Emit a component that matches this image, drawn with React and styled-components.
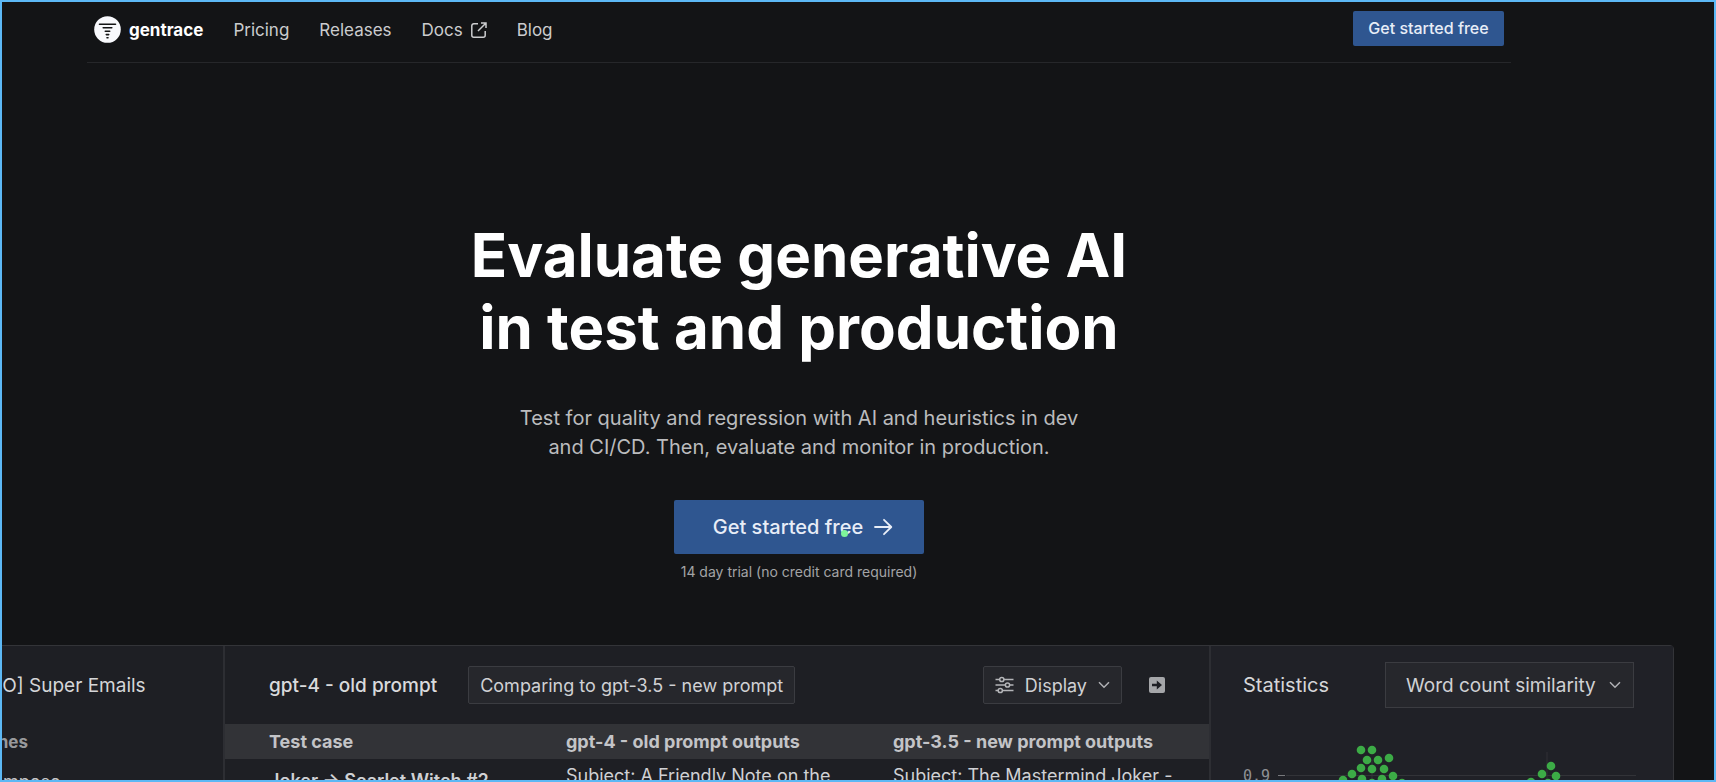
import React from 'react'
import styled, { createGlobalStyle } from 'styled-components'

const GlobalStyle = createGlobalStyle`
  * {
    box-sizing: border-box;
  }

  body {
    margin: 0;
    background-color: #131416;
    color: #ffffff;
    font-family: "Inter", sans-serif;
  }

  button, select {
    font-family: inherit;
    margin: 0;
  }
`;

const Page = styled.div`
  height: 100vh;
  border: 2px solid #5cb8f5;
  padding-right: 118px;
  overflow: hidden;
`;

const Header = styled.header`
  display: flex;
  align-items: center;
  justify-content: space-between;
  max-width: 1424px;
  height: 61px;
  margin: 0 auto;
  padding: 0 7px 8px;
  border-bottom: 1px solid #26272a;
`;

const Nav = styled.nav`
  display: flex;
  align-items: center;
  gap: 30px;
  padding-top: 3px;
`;

const Brand = styled.a`
  display: flex;
  align-items: center;
  gap: 8px;
  color: #ffffff;
  font-size: 17px;
  font-weight: 700;
  text-decoration: none;
`;

const NavLink = styled.a`
  display: flex;
  align-items: center;
  gap: 8px;
  color: #cbccce;
  font-size: 17px;
  line-height: 24px;
  text-decoration: none;
`;

const PrimaryButton = styled.button`
  display: flex;
  align-items: center;
  justify-content: center;
  gap: 11px;
  width: ${props => (props.$large ? '250px' : '151px')};
  height: ${props => (props.$large ? '54px' : '35px')};
  padding: ${props => (props.$large ? '0 0 0 8px' : '0')};
  border: none;
  border-radius: 2px;
  background-color: #2f5690;
  color: #e8edf7;
  font-size: ${props => (props.$large ? '20px' : '16px')};
  font-weight: 500;
`;

const Hero = styled.section`
  display: flex;
  flex-direction: column;
  align-items: center;
  padding: 156px 0 63px;
  text-align: center;
`;

const Title = styled.h1`
  margin: 0;
  font-size: 60px;
  font-weight: 700;
  line-height: 72px;
`;

const Subtitle = styled.p`
  margin: 41px 0 38px;
  color: #bbbcbe;
  font-size: 20px;
  line-height: 29px;
`;

const Note = styled.p`
  margin: 8px 0 0;
  color: #a3a4a6;
  font-size: 14px;
  line-height: 20px;
`;

const CursorWrap = styled.div`
  position: relative;
`;

const Cursor = styled.span`
  position: absolute;
  top: 30px;
  left: 167px;
  width: 7px;
  height: 7px;
  border-radius: 50%;
  background-color: #7df59a;
`;

/* wider than the column on purpose, it bleeds off the left side */
const Showcase = styled.div`
  display: flex;
  justify-content: center;
`;

const Product = styled.div`
  display: grid;
  grid-template-columns: 300px 986px 462px;
  flex: none;
  height: 460px;
  border: 1px solid #333438;
  border-radius: 4px;
  background-color: #1e1f24;
`;

const Pane = styled.section`
  border-right: ${props => (props.$last ? 'none' : '2px solid #2d2e33')};
  background-color: ${props => (props.$last ? '#202127' : 'transparent')};
  min-width: 0;
`;

const PaneHead = styled.div`
  display: flex;
  align-items: center;
  height: 78px;
  padding: ${props => props.$pad};
`;

const PaneTitle = styled.h2`
  flex: 1;
  margin: 0;
  color: #d5d6d8;
  font-size: ${props => (props.$small ? '19px' : '20px')};
  font-weight: 400;
  white-space: nowrap;
`;

const SideHeading = styled.h3`
  margin: 8px 0 0 27px;
  color: #98999c;
  font-size: 17px;
  font-weight: 700;
  line-height: 20px;
`;

const SideItem = styled.a`
  display: block;
  margin: 19px 0 0 54px;
  color: #c4c5c8;
  font-size: 18px;
  line-height: 22px;
  text-decoration: none;
`;

const RunBar = styled.div`
  display: flex;
  align-items: center;
  height: 78px;
  padding: 0 44px;
`;

const RunName = styled.h2`
  margin: 0 31px 0 0;
  color: #d9dadc;
  font-size: 19px;
  font-weight: 500;
`;

const ToolButton = styled.button`
  display: flex;
  align-items: center;
  gap: 11px;
  height: 38px;
  padding: 0 11px;
  border: 1px solid #3b3c41;
  border-radius: 2px;
  background-color: #26272c;
  color: #d0d1d4;
  font-size: 18px;
`;

const Spacer = styled.div`
  flex: 1;
`;

const IconButton = styled.button`
  display: flex;
  margin-left: 27px;
  padding: 0;
  border: none;
  background: none;
`;

const Table = styled.table`
  width: 100%;
  table-layout: fixed;
  border-collapse: collapse;
`;

const Th = styled.th`
  height: 35px;
  padding: ${props => (props.$first ? '0 0 0 44px' : '0')};
  background-color: #323337;
  color: #c3c4c7;
  font-size: 18px;
  font-weight: 700;
  text-align: left;
`;

const Td = styled.td`
  padding: ${props => (props.$first ? '10px 0 0 44px' : '5px 20px 0 0')};
  color: #d0d1d4;
  font-size: 18px;
  font-weight: ${props => (props.$first ? 600 : 400)};
  line-height: 24px;
  vertical-align: top;
`;

const SelectBox = styled.label`
  display: grid;
  align-items: center;
  width: 249px;
  height: 46px;

  > * {
    grid-area: 1 / 1;
  }

  svg {
    justify-self: end;
    margin-right: 13px;
    pointer-events: none;
  }
`;

const Select = styled.select`
  width: 100%;
  height: 100%;
  padding: 0 28px 0 20px;
  appearance: none;
  border: 1px solid #3b3c41;
  border-radius: 0;
  background-color: #26272c;
  color: #d0d1d4;
  font-size: 19px;
`;

const ChartText = styled.text`
  fill: #8f9094;
  font-family: "DejaVu Sans Mono", monospace;
  font-size: 15px;
`;

const dots = [
  [151, 26], [162, 26], [157, 36], [168, 36], [179, 34], [151, 44], [162, 45], [174, 45],
  [142, 50], [183, 52], [133, 56], [152, 55], [172, 55], [143, 61], [162, 59], [192, 59],
  [341, 42], [332, 50], [346, 52], [321, 58], [338, 59],
];

const Logo = () => (
  <svg width="27" height="27" viewBox="0 0 27 27" aria-hidden="true">
    <circle cx="13.5" cy="13.5" r="13.3" fill="#f8f9fd" />
    <path
      d="M5.5 8.2h16M9.2 11.8h8.6M11.3 15.3h4.4M12.3 18.6h2.4M13 21.8h1"
      stroke="#131416" strokeWidth="1.6" strokeLinecap="round"
    />
  </svg>
);

const ExternalIcon = () => (
  <svg width="16" height="16" viewBox="0 0 16 16" fill="none" stroke="#cbccce" strokeWidth="1.5" aria-hidden="true">
    <path d="M7 1.8H2.8a2 2 0 0 0-2 2v9.4a2 2 0 0 0 2 2h9.4a2 2 0 0 0 2-2V9M10 1h5v5M15 1L7 9" />
  </svg>
);

const ArrowIcon = () => (
  <svg width="19" height="18" viewBox="0 0 19 18" fill="none" stroke="#e8edf7" strokeWidth="1.8" aria-hidden="true">
    <path d="M1 9h16M10 1.8L17.3 9L10 16.2" strokeLinecap="round" strokeLinejoin="round" />
  </svg>
);

const SlidersIcon = () => (
  <svg width="19" height="18" viewBox="0 0 19 18" fill="none" stroke="#b4b5b8" strokeWidth="1.5" aria-hidden="true">
    <path d="M.5 3.5h4.2M9 3.5h9.5M.5 9h9.8M14.7 9h3.8M.5 14.5h2.7M7.5 14.5h11" />
    <circle cx="6.8" cy="3.5" r="2.1" />
    <circle cx="12.5" cy="9" r="2.1" />
    <circle cx="5.3" cy="14.5" r="2.1" />
  </svg>
);

const Chevron = () => (
  <svg width="12" height="8" viewBox="0 0 12 8" fill="none" stroke="#b0b1b4" strokeWidth="1.5" aria-hidden="true">
    <path d="M1 1.3l5 5l5-5" />
  </svg>
);

const PanelIcon = () => (
  <svg width="16" height="16" viewBox="0 0 16 16" aria-hidden="true">
    <rect width="16" height="16" rx="2" fill="#a5a6a9" />
    <path d="M3 6.8h4.8V3.6L13 8l-5.2 4.4V9.2H3z" fill="#1e1f24" />
  </svg>
);

const Chart = () => (
  <svg width="460" height="300" viewBox="1 0 460 300" role="img" aria-label="Word count similarity">
    <path d="M162 36v260M337 28v268" stroke="#303136" strokeWidth="1" />
    <path d="M76 51.5h350" stroke="#323338" strokeWidth="1" />
    <path d="M68 51.5h7" stroke="#77787c" strokeWidth="1" />
    <ChartText x="33" y="57">0.9</ChartText>
    {dots.map(([x, y]) => (
      <circle key={`${x}-${y}`} cx={x} cy={y} r="4.3" fill="#3cab46" />
    ))}
  </svg>
);

const App = () => {
  return (
    <>
      <GlobalStyle />
      <Page>
        <Header>
          <Nav>
            <Brand href="#">
              <Logo />
              gentrace
            </Brand>
            <NavLink href="#pricing">Pricing</NavLink>
            <NavLink href="#releases">Releases</NavLink>
            <NavLink href="#docs">
              Docs
              <ExternalIcon />
            </NavLink>
            <NavLink href="#blog">Blog</NavLink>
          </Nav>
          <PrimaryButton>Get started free</PrimaryButton>
        </Header>

        <Hero>
          <Title>
            Evaluate generative AI
            <br />
            in test and production
          </Title>
          <Subtitle>
            Test for quality and regression with AI and heuristics in dev
            <br />
            and CI/CD. Then, evaluate and monitor in production.
          </Subtitle>
          <CursorWrap>
            <PrimaryButton $large>
              Get started free
              <ArrowIcon />
            </PrimaryButton>
            <Cursor />
          </CursorWrap>
          <Note>14 day trial (no credit card required)</Note>
        </Hero>

        <Showcase>
          <Product>
            <Pane>
              <PaneHead $pad="0 0 0 28px">
                <PaneTitle $small>[DEMO] Super Emails</PaneTitle>
              </PaneHead>
              <SideHeading>Pipelines</SideHeading>
              <SideItem href="#compose">Compose</SideItem>
            </Pane>

            <Pane>
              <RunBar>
                <RunName>gpt-4 - old prompt</RunName>
                <ToolButton>Comparing to gpt-3.5 - new prompt</ToolButton>
                <Spacer />
                <ToolButton>
                  <SlidersIcon />
                  Display
                  <Chevron />
                </ToolButton>
                <IconButton aria-label="Open panel">
                  <PanelIcon />
                </IconButton>
              </RunBar>
              <Table>
                <colgroup>
                  <col width="341" />
                  <col width="327" />
                  <col />
                </colgroup>
                <thead>
                  <tr>
                    <Th $first>Test case</Th>
                    <Th>gpt-4 - old prompt outputs</Th>
                    <Th>gpt-3.5 - new prompt outputs</Th>
                  </tr>
                </thead>
                <tbody>
                  <tr>
                    <Td $first>Joker → Scarlet Witch #2</Td>
                    <Td>Subject: A Friendly Note on the</Td>
                    <Td>Subject: The Mastermind Joker -</Td>
                  </tr>
                </tbody>
              </Table>
            </Pane>

            <Pane $last>
              <PaneHead $pad="0 39px 0 32px">
                <PaneTitle>Statistics</PaneTitle>
                <SelectBox>
                  <Select aria-label="Metric">
                    <option>Word count similarity</option>
                  </Select>
                  <Chevron />
                </SelectBox>
              </PaneHead>
              <Chart />
            </Pane>
          </Product>
        </Showcase>
      </Page>
    </>
  );
};

export default App;
